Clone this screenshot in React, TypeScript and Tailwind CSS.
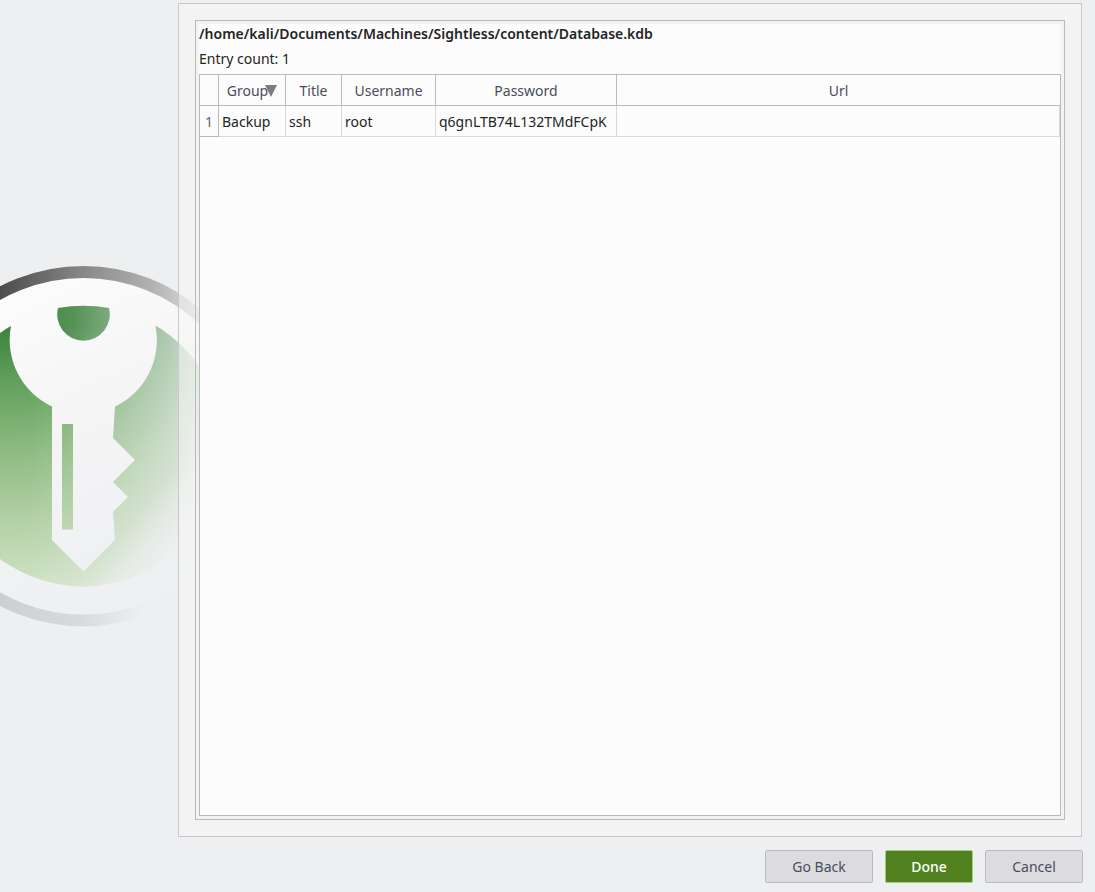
import type { ReactNode } from "react";

function Emblem() {
  return (
    <svg
      aria-hidden="true"
      viewBox="0 0 200 380"
      className="pointer-events-none absolute top-[256px] left-0 h-[380px] w-[200px]"
    >
      <defs>
        <linearGradient id="ring" gradientUnits="userSpaceOnUse" x1="0" y1="30" x2="200" y2="50">
          <stop offset="0" stopColor="#4c4c4c" />
          <stop offset="0.42" stopColor="#8a8a8a" />
          <stop offset="0.75" stopColor="#b2b2b2" />
          <stop offset="1" stopColor="#dcdcde" />
        </linearGradient>
        <linearGradient id="ringLow" gradientUnits="userSpaceOnUse" x1="0" y1="340" x2="140" y2="365">
          <stop offset="0" stopColor="#cdcecf" />
          <stop offset="0.6" stopColor="#d9dadb" />
          <stop offset="1" stopColor="#eeeff1" />
        </linearGradient>
        <linearGradient id="plate" gradientUnits="userSpaceOnUse" x1="20" y1="30" x2="150" y2="300">
          <stop offset="0" stopColor="#fcfcfc" />
          <stop offset="0.45" stopColor="#f5f5f6" />
          <stop offset="1" stopColor="#eff0f2" />
        </linearGradient>
        <linearGradient id="green" gradientUnits="userSpaceOnUse" x1="10" y1="75" x2="25" y2="330">
          <stop offset="0" stopColor="#40853f" />
          <stop offset="0.2" stopColor="#62a05d" />
          <stop offset="0.5" stopColor="#92be86" />
          <stop offset="0.75" stopColor="#b4d1a7" />
          <stop offset="1" stopColor="#cfe2c5" />
        </linearGradient>
        <linearGradient id="fade" gradientUnits="userSpaceOnUse" x1="30" y1="50" x2="205" y2="50">
          <stop offset="0" stopColor="#eeeff1" stopOpacity="0" />
          <stop offset="0.25" stopColor="#eeeff1" stopOpacity="0.13" />
          <stop offset="0.45" stopColor="#eeeff1" stopOpacity="0.34" />
          <stop offset="0.8" stopColor="#eeeff1" stopOpacity="0.63" />
          <stop offset="1" stopColor="#eeeff1" stopOpacity="0.85" />
        </linearGradient>
        <linearGradient id="fadeLow" gradientUnits="userSpaceOnUse" x1="118" y1="206" x2="194" y2="266">
          <stop offset="0" stopColor="#eeeff1" stopOpacity="0" />
          <stop offset="0.5" stopColor="#eeeff1" stopOpacity="0.1" />
          <stop offset="1" stopColor="#eeeff1" stopOpacity="0.95" />
        </linearGradient>
        <mask id="disc" maskUnits="userSpaceOnUse" x="0" y="0" width="200" height="380">
          <circle cx="83.5" cy="190" r="140.5" fill="white" />
          <path
            fill="black"
            d="M11 70 A73.5 73.5 0 0 0 52 150.5 V284 L83.5 315.5 L115 284 L113 256 L128 241 L113 226 L135 204 L113 182 L115 150.5 A73.5 73.5 0 0 0 155.500 70 V40 H11 Z"
          />
          <path fill="white" d="M58 52 Q83.5 47.500 109 52 A26.300 26.300 0 1 1 58 52 Z M62 168 H73 V273.500 H62 Z" />
        </mask>
        <clipPath id="upper">
          <rect x="0" y="0" width="200" height="190" />
        </clipPath>
        <clipPath id="lower">
          <rect x="0" y="190" width="160" height="190" />
        </clipPath>
      </defs>
      <circle cx="83.5" cy="190.5" r="168.5" fill="url(#plate)" />
      <circle cx="83.5" cy="190.2" r="174.3" fill="none" stroke="url(#ring)" strokeWidth="12" clipPath="url(#upper)" />
      <circle cx="83.5" cy="190.2" r="174.3" fill="none" stroke="url(#ringLow)" strokeWidth="12" clipPath="url(#lower)" />
      <g mask="url(#disc)">
        <rect x="0" y="45" width="200" height="290" fill="url(#green)" />
        <rect x="0" y="45" width="200" height="290" fill="url(#fade)" />
        <rect x="0" y="45" width="200" height="290" fill="url(#fadeLow)" />
      </g>
    </svg>
  );
}

const columns = [
  { name: "Title", width: "w-[56px]" },
  { name: "Username", width: "w-[94px]" },
  { name: "Password", width: "w-[181px]" },
];

const entries = [
  { group: "Backup", title: "ssh", username: "root", password: "q6gnLTB74L132TMdFCpK", url: "" },
];

const headClass = "border-r border-b border-[#bababa] px-0 pt-0.5 pb-0 font-normal text-[#4a4d58]";
const cellClass = "border-r border-b border-[#d8d8d8] px-[3px] pt-0.5 pb-0";

function EntryTable() {
  return (
    <table className="w-full table-fixed border-separate border-spacing-0 text-sm leading-5">
      <thead>
        <tr className="h-[31px]">
          <th className={`${headClass} w-[19px]`} aria-label="Row" />
          <th className={`${headClass} w-[67px]`} aria-sort="descending">
            <span className="flex items-center justify-center">
              Group
              <svg aria-hidden="true" viewBox="0 0 12 12" className="-ml-[3px] size-3 shrink-0">
                <path d="M0 0H12L6 12Z" fill="#7c7c7c" />
              </svg>
            </span>
          </th>
          {columns.map((column) => (
            <th key={column.name} className={`${headClass} ${column.width}`}>
              {column.name}
            </th>
          ))}
          <th className="border-b border-[#bababa] px-0 pt-0.5 pb-0 font-normal text-[#4a4d58]">Url</th>
        </tr>
      </thead>
      <tbody>
        {entries.map((entry, index) => (
          <tr key={entry.title} className="h-[31px]">
            <th scope="row" className="border-r border-b border-[#bababa] px-0 pt-0.5 pb-0 font-normal text-[#5f6168]">
              {index + 1}
            </th>
            <td className={cellClass}>{entry.group}</td>
            <td className={cellClass}>{entry.title}</td>
            <td className={cellClass}>{entry.username}</td>
            <td className={cellClass}>{entry.password}</td>
            <td className={cellClass}>{entry.url}</td>
          </tr>
        ))}
      </tbody>
    </table>
  );
}

function DialogButton({ primary = false, className, children }: { primary?: boolean; className: string; children: ReactNode }) {
  const tone = primary
    ? "border-[#a3cd7c] bg-[#51811f] font-medium text-white"
    : "border-[#bbbbbe] bg-[#dcdce0] text-[#4a4d58]";
  return (
    <button type="button" className={`h-[33px] rounded-[2px] border text-sm ${tone} ${className}`}>
      {children}
    </button>
  );
}

export default function App() {
  return (
    <div className="relative flex min-h-screen flex-col bg-[#eeeff1] pt-[3px] pr-3 pb-[9px] pl-[178px] font-['Noto_Sans',sans-serif] text-sm text-[#242424]">
      <Emblem />
      <main className="relative mr-px flex flex-1 flex-col border border-[#c7c7cc] bg-[#f8f7f5]/50 p-4">
        <section className="flex flex-1 flex-col border border-[#bababa] p-[3px]">
          <div className="flex flex-1 flex-col bg-[#fcfcfc]">
            <h1 className="h-[25px] text-sm leading-5 font-semibold">
              /home/kali/Documents/Machines/Sightless/content/Database.kdb
            </h1>
            <p className="h-[25px] leading-5">Entry count: 1</p>
            <div className="flex-1 border border-[#bababa]">
              <EntryTable />
            </div>
          </div>
        </section>
      </main>
      <footer className="relative flex justify-end gap-3 pt-[13px]">
        <DialogButton className="w-[108px]">Go Back</DialogButton>
        <DialogButton primary className="w-[88px]">Done</DialogButton>
        <DialogButton className="w-[98px]">Cancel</DialogButton>
      </footer>
    </div>
  );
}
